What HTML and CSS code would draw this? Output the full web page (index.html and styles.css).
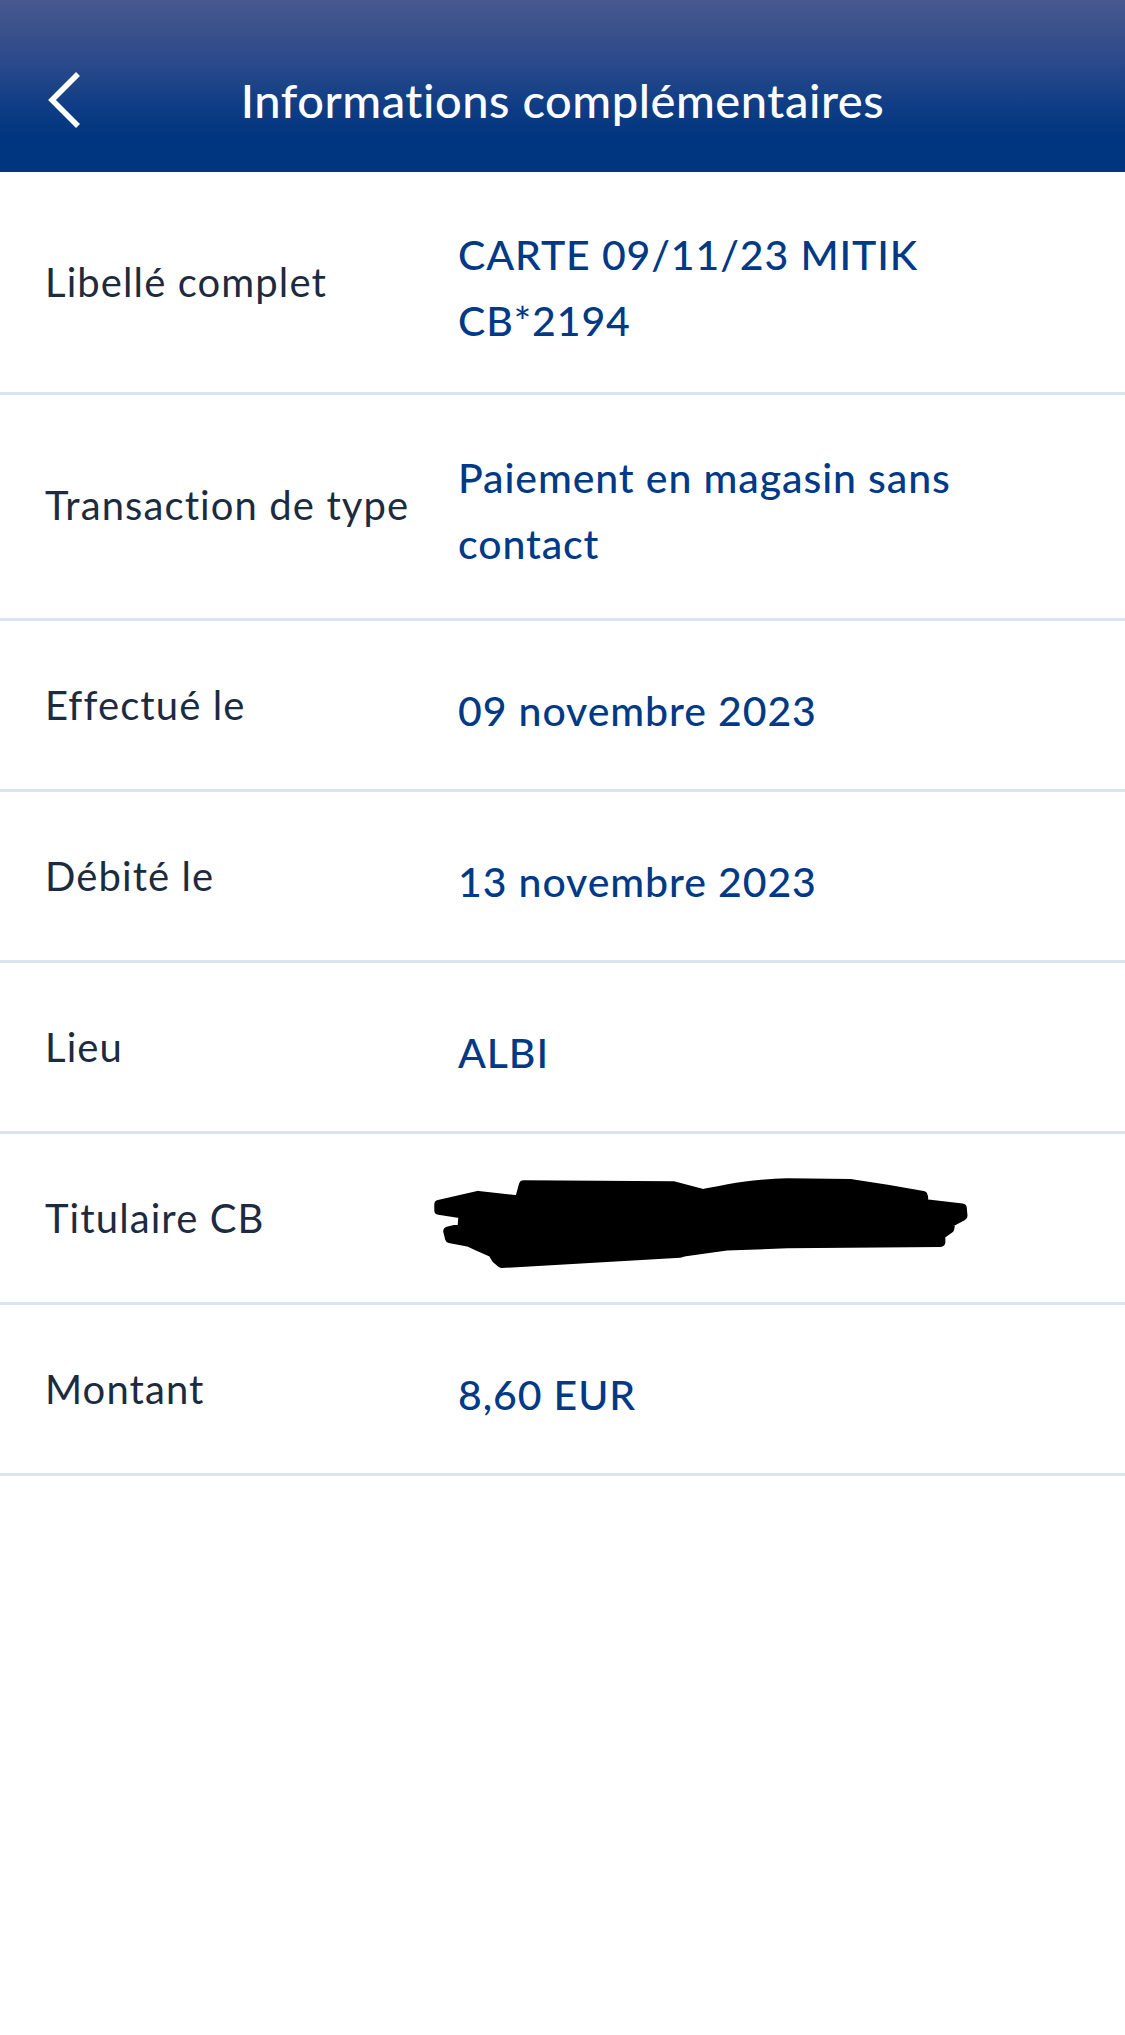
FILE: index.html
```html
<!DOCTYPE html>
<html lang="fr">
<head>
<meta charset="utf-8">
<title>Informations complémentaires</title>
<link rel="stylesheet" href="styles.css">
</head>
<body>
<header class="topbar">
  <div class="back">
    <svg class="back-icon" width="40" height="60" viewBox="0 0 40 60" aria-hidden="true">
      <path d="M33 4 L7 30 L33 56" fill="none" stroke="#ffffff" stroke-width="5.5" stroke-linecap="butt" stroke-linejoin="miter"/>
    </svg>
  </div>
  <h1 class="title">Informations complémentaires</h1>
  <div class="spacer"></div>
</header>
<main class="details">
  <div class="row row-two">
    <div class="label">Libellé complet</div>
    <div class="value">CARTE 09/11/23 MITIK<br>CB*2194</div>
  </div>
  <div class="row row-two row-two-b">
    <div class="label">Transaction de type</div>
    <div class="value">Paiement en magasin sans<br>contact</div>
  </div>
  <div class="row">
    <div class="label">Effectué le</div>
    <div class="value">09 novembre 2023</div>
  </div>
  <div class="row">
    <div class="label">Débité le</div>
    <div class="value">13 novembre 2023</div>
  </div>
  <div class="row">
    <div class="label">Lieu</div>
    <div class="value">ALBI</div>
  </div>
  <div class="row">
    <div class="label">Titulaire CB</div>
    <div class="value value-redacted">
      <svg class="redaction" width="560" height="120" viewBox="0 0 1568 336" preserveAspectRatio="none" aria-hidden="true">
        <path d="M25 130 L135 105 L250 118 L262 75 L680 78 L765 100 C840 85 900 72 1000 70 L1180 72 L1280 88 L1380 105 L1382 128 L1490 140 L1492 162 L1458 180 L1455 198 L1430 215 L1430 236 L1000 240 L830 246 L715 262 L700 266 L200 295 L185 282 L175 265 L140 250 L110 236 L55 225 L50 205 L90 195 L92 170 L115 160 L25 146 Z" fill="#000" stroke="#000" stroke-width="26" stroke-linejoin="round"/>
        <path d="M40 135 L135 112 M265 82 L675 82 M265 112 L675 112 M60 212 L140 205 M110 230 L700 255 M1250 100 L1380 112 M1240 145 L1485 155 M1300 190 L1450 185 M1300 225 L1425 225" fill="none" stroke="#000" stroke-width="30" stroke-linecap="round"/>
      </svg>
    </div>
  </div>
  <div class="row">
    <div class="label">Montant</div>
    <div class="value">8,60 EUR</div>
  </div>
</main>
</body>
</html>
```

FILE: styles.css
```css
* {
  box-sizing: border-box;
}

html, body {
  margin: 0;
  padding: 0;
  background: #ffffff;
}

body {
  font-family: "Lato", "Liberation Sans", sans-serif;
  width: 1125px;
  min-height: 2035px;
}

.topbar {
  height: 172px;
  padding-top: 28px;
  display: grid;
  grid-template-columns: 1fr auto 1fr;
  align-items: center;
  background: linear-gradient(to bottom, #48588e 0%, #2c4a8b 35%, #0e3d85 62%, #00367f 80%, #00357f 100%);
}

.back {
  padding-left: 45px;
  display: flex;
  align-items: center;
  height: 144px;
}

.back-icon {
  display: block;
}

.title {
  margin: 0;
  color: #ffffff;
  font-size: 47px;
  font-weight: 500;
  line-height: 60px;
  letter-spacing: 0.55px;
  white-space: nowrap;
}

.details {
  display: flex;
  flex-direction: column;
}

.row {
  display: flex;
  align-items: center;
  min-height: 171px;
  padding: 0 45px;
  border-bottom: 3px solid #dae3ee;
}

.row-two {
  padding-top: 38px;
  padding-bottom: 38px;
}

.row-two-b {
  padding-bottom: 41px;
}

.label {
  width: 413px;
  flex: none;
  color: #1c2b40;
  font-size: 40px;
  line-height: 54px;
  letter-spacing: 1.1px;
}

.value {
  flex: 1;
  padding-top: 12px;
  color: #003a86;
  font-size: 41px;
  font-weight: 500;
  line-height: 66px;
  letter-spacing: 0.9px;
  white-space: nowrap;
}

.value-redacted {
  padding-top: 0;
  margin-left: -28px;
}

.redaction {
  display: block;
}
```
